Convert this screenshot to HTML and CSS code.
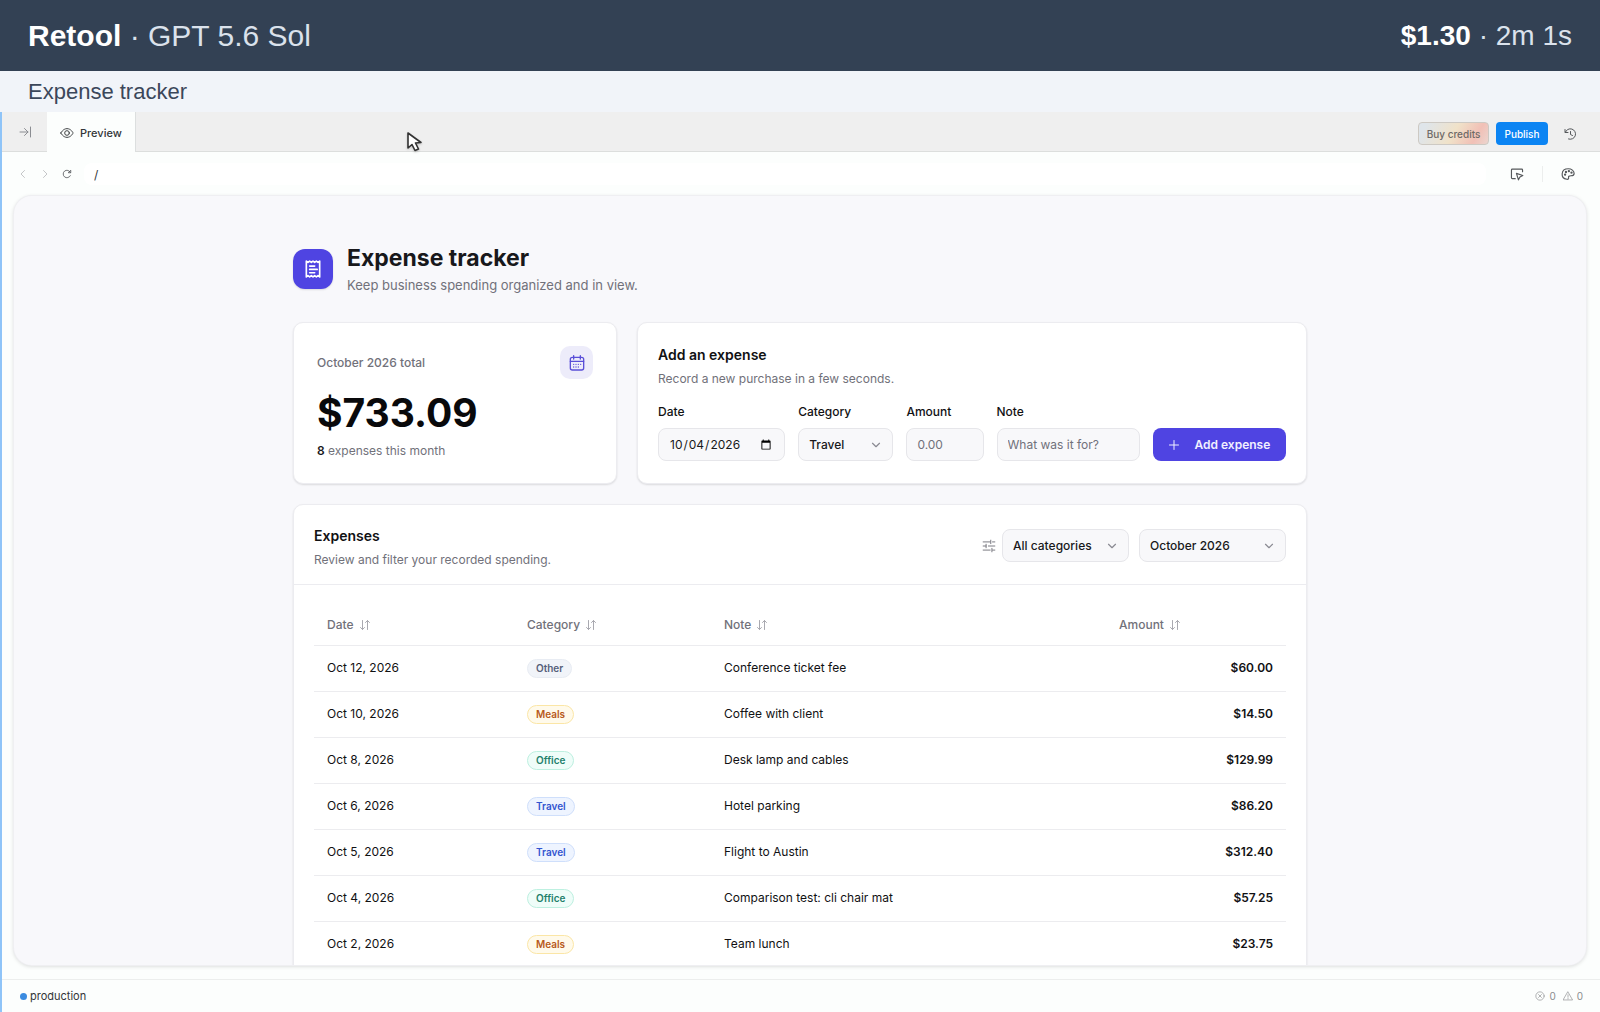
FILE: index.html
```html
<!DOCTYPE html>
<html lang="en">
<head>
<meta charset="utf-8">
<title>Retool · Expense tracker</title>
<meta name="viewport" content="width=device-width, initial-scale=1">
<link rel="stylesheet" href="styles.css">
</head>
<body>
<svg class="sprite" aria-hidden="true">
  <symbol id="chevron" viewBox="0 0 24 24"><path d="m6 9 6 6 6-6"/></symbol>
  <symbol id="sort" viewBox="0 0 24 24"><path d="M7 3v18M3 17l4 4 4-4M17 21V3M13 7l4-4 4 4"/></symbol>
</svg>

<header class="run-bar">
  <p class="run-name"><strong>Retool</strong> · GPT 5.6 Sol</p>
  <p class="run-cost"><strong>$1.30</strong> · 2m 1s</p>
</header>
<p class="run-task">Expense tracker</p>

<div class="editor">
  <div class="tabs">
    <button class="icon-button collapse" aria-label="Collapse panel">
      <svg class="icon icon-12 muted" viewBox="0 0 24 24"><path d="M2 12h16M11 5l7 7-7 7M23 2v20"/></svg>
    </button>
    <button class="tab">
      <svg class="icon icon-14 thin" viewBox="0 0 24 24"><path d="M1.500 12S5 4.500 12 4.500 22.500 12 22.500 12 19 19.500 12 19.500 1.500 12 1.500 12z"/><circle cx="12" cy="12" r="4"/></svg>
      Preview
    </button>
    <div class="tab-actions">
      <button class="small-button credits">Buy credits</button>
      <button class="small-button publish">Publish</button>
      <button class="icon-button history" aria-label="History">
        <svg class="icon icon-12" viewBox="0 0 24 24"><path d="M2 3v6h6M2.500 9A10.500 10.500 0 1 1 9 22M13 7v6l4 2"/></svg>
      </button>
    </div>
    <svg class="pointer" viewBox="0 0 18 22" aria-hidden="true"><path d="M2 2v15l4-3.500 3 6 3.500-1.500-3-6 5.500-.500z"/></svg>
  </div>

  <div class="address">
    <button class="icon-button" aria-label="Back"><svg class="icon icon-12 faint" viewBox="0 0 24 24"><path d="m15 5-7 7 7 7"/></svg></button>
    <button class="icon-button" aria-label="Forward"><svg class="icon icon-12 faint" viewBox="0 0 24 24"><path d="m9 5 7 7-7 7"/></svg></button>
    <button class="icon-button" aria-label="Reload"><svg class="icon icon-10" viewBox="0 0 24 24"><path d="M20 16a9 9 0 1 1 0-8M21 4v5h-5z"/></svg></button>
    <input class="path" aria-label="Page path" value="/">
    <button class="icon-button" aria-label="Select element"><svg class="icon icon-14" viewBox="0 0 24 24"><path d="M9 20H4a1.500 1.500 0 0 1-1.500-1.500V5A1.500 1.500 0 0 1 4 3.500h16A1.500 1.500 0 0 1 21.500 5v3M11 11l3.500 11 2.500-5 5-2.500z"/></svg></button>
    <span class="rule"></span>
    <button class="icon-button" aria-label="Theme"><svg class="icon icon-14" viewBox="0 0 24 24"><path d="M10 21C4 20 1.500 16 2 11.500 2.500 6 7 3 12.500 3S22.500 6.500 22.500 11c0 3.500-2.500 4-5.500 4-3.500 0-4.500 1-4 3.500.3 1.700-.8 2.900-3 2.500z"/><circle cx="7" cy="13" r="1"/><circle cx="8.500" cy="8.500" r="1"/><circle cx="13.500" cy="7" r="1"/><circle cx="18" cy="9.500" r="1"/></svg></button>
  </div>

  <main class="canvas">
    <div class="page">
      <div class="intro">
        <span class="logo"><svg class="icon icon-20" viewBox="0 0 24 24"><path d="M4 2.500l2 1.500 2-1.500L10 4l2-1.500L14 4l2-1.500L18 4l2-1.500v19L18 20l-2 1.500-2-1.500-2 1.500-2-1.500-2 1.500L6 20l-2 1.500zM8 8.500h6M8 12.500h9M8 16.500h6"/></svg></span>
        <div>
          <h1 class="title">Expense tracker</h1>
          <p class="lead">Keep business spending organized and in view.</p>
        </div>
      </div>

      <div class="top-cards">
        <section class="card total">
          <div class="total-head">
            <h2 class="total-label">October 2026 total</h2>
            <span class="badge"><svg class="icon icon-16" viewBox="0 0 24 24"><rect x="2" y="3.500" width="20" height="19" rx="3"/><path d="M2 9.500h20M7 1v5M17 1v5"/><path d="M7 14h.01M10.500 14h.01M14 14h.01M17.500 14h.01M7 18h.01M10.500 18h.01M14 18h.01"/></svg></span>
          </div>
          <p class="total-value">$733.09</p>
          <p class="total-count"><strong>8</strong> expenses this month</p>
        </section>

        <section class="card add">
          <h2 class="card-title">Add an expense</h2>
          <p class="card-note">Record a new purchase in a few seconds.</p>
          <form class="fields">
            <div class="field"><label for="date">Date</label><input class="control" id="date" type="date" value="2026-10-04"></div>
            <div class="field"><label for="category">Category</label>
              <span class="select"><select class="control" id="category"><option>Travel</option><option>Meals</option><option>Office</option><option>Other</option></select><svg class="icon icon-14 arrow"><use href="#chevron"/></svg></span>
            </div>
            <div class="field"><label for="amount">Amount</label><input class="control" id="amount" placeholder="0.00"></div>
            <div class="field"><label for="note">Note</label><input class="control" id="note" placeholder="What was it for?"></div>
            <button class="submit" type="button"><svg class="icon icon-12" viewBox="0 0 24 24"><path d="M12 3v18M3 12h18"/></svg>Add expense</button>
          </form>
        </section>
      </div>

      <section class="card list">
        <div class="list-head">
          <div>
            <h2 class="card-title">Expenses</h2>
            <p class="card-note">Review and filter your recorded spending.</p>
          </div>
          <div class="filters">
            <svg class="icon icon-14 thin" viewBox="0 0 24 24"><path d="M2 5h12M18 5h4M15 2v6M2 12h5M11 12h11M7 9v6M2 19h12M18 19h4M17 16v6"/></svg>
            <span class="select by-category"><select class="control" aria-label="Filter by category"><option>All categories</option></select><svg class="icon icon-14 arrow"><use href="#chevron"/></svg></span>
            <span class="select by-month"><select class="control" aria-label="Filter by month"><option>October 2026</option></select><svg class="icon icon-14 arrow"><use href="#chevron"/></svg></span>
          </div>
        </div>
        <div class="table-wrap">
          <table class="table">
            <colgroup><col class="col-date"><col class="col-category"><col><col class="col-amount"></colgroup>
            <thead>
              <tr>
                <th><button class="sort">Date<svg class="icon icon-12"><use href="#sort"/></svg></button></th>
                <th><button class="sort">Category<svg class="icon icon-12"><use href="#sort"/></svg></button></th>
                <th><button class="sort">Note<svg class="icon icon-12"><use href="#sort"/></svg></button></th>
                <th><button class="sort">Amount<svg class="icon icon-12"><use href="#sort"/></svg></button></th>
              </tr>
            </thead>
            <tbody>
              <tr><td>Oct 12, 2026</td><td><span class="tag other">Other</span></td><td>Conference ticket fee</td><td class="money">$60.00</td></tr>
              <tr><td>Oct 10, 2026</td><td><span class="tag meals">Meals</span></td><td>Coffee with client</td><td class="money">$14.50</td></tr>
              <tr><td>Oct 8, 2026</td><td><span class="tag office">Office</span></td><td>Desk lamp and cables</td><td class="money">$129.99</td></tr>
              <tr><td>Oct 6, 2026</td><td><span class="tag travel">Travel</span></td><td>Hotel parking</td><td class="money">$86.20</td></tr>
              <tr><td>Oct 5, 2026</td><td><span class="tag travel">Travel</span></td><td>Flight to Austin</td><td class="money">$312.40</td></tr>
              <tr><td>Oct 4, 2026</td><td><span class="tag office">Office</span></td><td>Comparison test: cli chair mat</td><td class="money">$57.25</td></tr>
              <tr><td>Oct 2, 2026</td><td><span class="tag meals">Meals</span></td><td>Team lunch</td><td class="money">$23.75</td></tr>
            </tbody>
          </table>
        </div>
      </section>
    </div>
  </main>

  <footer class="status">
    <span class="env">production</span>
    <span class="counter"><svg class="icon icon-10 thin" viewBox="0 0 24 24"><circle cx="12" cy="12" r="10"/><path d="m8.500 8.500 7 7M15.500 8.500l-7 7"/></svg>0</span>
    <span class="counter"><svg class="icon icon-10 thin" viewBox="0 0 24 24"><path d="M12 2.500 23 21.500H1zM12 9v6M12 18v1"/></svg>0</span>
  </footer>
</div>
</body>
</html>
```
FILE: styles.css
```css
* { box-sizing: border-box; }

body {
  margin: 0;
  height: 100vh;
  display: flex;
  flex-direction: column;
  overflow: hidden;
  background: #fcfefd;
  color: #111113;
  font-family: Inter, "Liberation Sans", sans-serif;
  font-size: 12px;
  line-height: 18px;
}

h1, h2, p { margin: 0; }
button, input, select { font: inherit; color: inherit; }
button { margin: 0; padding: 0; border: 0; background: none; cursor: pointer; }

.sprite { position: absolute; width: 0; height: 0; }
.icon { flex: none; fill: none; stroke: currentColor; stroke-width: 2; stroke-linecap: round; stroke-linejoin: round; }
.icon.thin { stroke-width: 1.6; }
.icon-10 { width: 10px; height: 10px; }
.icon-12 { width: 12px; height: 12px; }
.icon-14 { width: 14px; height: 14px; }
.icon-16 { width: 16px; height: 16px; }
.icon-20 { width: 20px; height: 20px; }
.muted { color: #8b8d92; }
.faint { color: #c4c6c8; }

/* Run summary */
.run-bar {
  flex: none;
  display: flex;
  align-items: center;
  justify-content: space-between;
  height: 71px;
  padding: 0 28px;
  background: #334154;
  color: #dbe2ec;
  font-family: "Liberation Sans", Arial, sans-serif;
}
.run-name { font-size: 30px; line-height: 36px; }
.run-cost { font-size: 28px; line-height: 36px; }
.run-bar strong { color: #fff; }
.run-task {
  flex: none;
  padding: 6px 28px 5px;
  background: #f1f4f9;
  color: #3b475a;
  font-family: "Liberation Sans", Arial, sans-serif;
  font-size: 22px;
  line-height: 30px;
}

/* Editor chrome */
.editor {
  flex: 1;
  min-height: 0;
  display: flex;
  flex-direction: column;
  border-left: 2px solid #8fc4f8;
}
.tabs {
  position: relative;
  flex: none;
  display: flex;
  height: 40px;
  background: #efefef;
  box-shadow: inset 0 -1px #dcdedd;
  font-size: 11px;
  font-weight: 500;
}
.icon-button { flex: none; display: grid; place-items: center; width: 22px; height: 22px; color: #55585b; }
.collapse { width: 45px; height: 40px; }
.tab {
  display: flex;
  align-items: center;
  gap: 6px;
  padding: 2px 13px 0;
  background: #fcfefd;
  border-right: 1px solid #dcdfdf;
  color: #333638;
}
.tab-actions { display: flex; align-items: center; gap: 7px; margin-left: auto; padding: 3px 19px 0 0; }
.small-button { height: 23px; border-radius: 4px; font-size: 10px; }
.credits {
  width: 71px;
  border: 1px solid #cdc9c3;
  background: linear-gradient(120deg, #dfe5ea 10%, #f0e2c9 50%, #f1c0b6 80%, #ecd5cf);
  color: #6e6a66;
}
.publish { width: 52px; background: #0b84f3; color: #fff; }
.history { margin-left: 4px; }
.pointer { position: absolute; left: 404px; top: 19px; width: 18px; height: 22px; fill: #fff; stroke: #333; stroke-width: 1.6; stroke-linejoin: round; filter: drop-shadow(0 1px 1px #0003); }

.address { flex: none; display: flex; align-items: center; height: 42px; padding: 2px 21px 0 10px; }
.path { flex: 1; min-width: 0; height: 22px; margin: 0 20px 0 6px; padding: 0 10px; border: 0; border-radius: 8px; background: #fff; color: #333638; }
.rule { width: 1px; height: 16px; margin: 0 14px; background: #eceeed; }

.canvas {
  flex: 1;
  min-height: 0;
  overflow: hidden;
  margin: 2px 14px 14px 12px;
  border-radius: 18px;
  background: #f8f8fb;
  box-shadow: 0 0 0 1px #efeff2, 0 1px 4px #0000002e;
}
.status {
  flex: none;
  display: flex;
  align-items: center;
  gap: 7px;
  height: 33px;
  padding: 0 17px 0 18px;
  border-top: 1px solid #eceeed;
  color: #333638;
  font-size: 11px;
}
.env { display: flex; align-items: center; gap: 3px; margin-right: auto; }
.env::before { content: ""; width: 7px; height: 7px; border-radius: 50%; background: #3b8be0; }
.counter { display: flex; align-items: center; gap: 4px; color: #8b8d8f; font-size: 10px; }

/* Expense page */
.page { max-width: 1014px; margin: 0 auto; padding-top: 46px; }
.intro { display: flex; align-items: center; gap: 14px; margin-bottom: 26px; }
.logo { display: grid; place-items: center; width: 40px; height: 40px; border-radius: 12px; background: #4f44e2; color: #fff; box-shadow: 0 1px 2px #0000001f; }
.title { font-size: 23px; font-weight: 700; line-height: 32px; color: #18181b; }
.lead { font-size: 13px; line-height: 22px; color: #71717a; }

.card { border: 1px solid #ececf0; border-radius: 10px; background: #fff; box-shadow: 0 1px 2px #0000001f; }
.top-cards { display: grid; grid-template-columns: 324px 1fr; gap: 20px; margin-bottom: 20px; }

.total { padding: 23px; }
.total-head { display: flex; align-items: center; justify-content: space-between; }
.total-label { font-size: 12px; font-weight: 500; color: #71717a; }
.badge { display: grid; place-items: center; width: 33px; height: 33px; border-radius: 10px; background: #edecfa; color: #5a4fd8; }
.total-value { margin: 11px 0 6px; font-size: 39px; font-weight: 700; line-height: 46px; color: #09090b; }
.total-count { color: #71717a; }
.total-count strong { font-weight: 600; color: #18181b; }

.add { padding: 20px; }
.card-title { font-size: 14px; font-weight: 600; line-height: 24px; }
.card-note { line-height: 24px; color: #71717a; }
.fields { display: grid; grid-template-columns: 127fr 95fr 77fr 143fr 133fr; gap: 13px; align-items: end; margin-top: 12px; }
.field { display: grid; grid-template-columns: minmax(0, 1fr); gap: 7px; min-width: 0; font-weight: 500; }
.control {
  width: 100%;
  min-width: 0;
  height: 33px;
  padding: 0 10px;
  border: 1px solid #e6e6ea;
  border-radius: 8px;
  background: #f8f8fa;
  font-weight: 400;
  color: #18181b;
}
.control::placeholder { color: #71717a; opacity: 1; }
.select { position: relative; display: block; }
.select .control { appearance: none; font-weight: 500; }
.arrow { position: absolute; right: 10px; top: 10px; color: #8a8a92; pointer-events: none; }
.submit { display: flex; align-items: center; justify-content: center; gap: 14px; height: 33px; border-radius: 8px; background: #4f44e2; color: #f1f0ff; font-weight: 600; }

.list-head { display: flex; align-items: flex-start; justify-content: space-between; padding: 19px 20px 12px; border-bottom: 1px solid #ececf0; }
.filters { display: flex; align-items: center; gap: 10px; padding-top: 5px; color: #71717a; }
.filters > .icon { margin-right: -4px; }
.by-category { width: 127px; }
.by-month { width: 147px; }

.table-wrap { padding: 20px; }
.table { width: 100%; border-collapse: collapse; table-layout: fixed; }
.col-date { width: 200px; }
.col-category { width: 197px; }
.col-amount { width: 180px; }
.table th, .table td { padding: 0 13px; text-align: left; border-bottom: 1px solid #ececef; }
.table th { height: 40px; }
.table td { height: 46px; }
.table .money { text-align: right; font-weight: 600; }
.sort { display: flex; align-items: center; gap: 5px; font-weight: 500; color: #71717a; }
.sort .icon { color: #a9a9b0; }
.tag { display: block; width: fit-content; padding: 0 8px; border: 1px solid; border-radius: 10px; font-size: 10px; font-weight: 600; line-height: 17px; }
.other { color: #56607a; background: #f1f4f9; border-color: #e8ecf3; }
.meals { color: #b85a1c; background: #fffaeb; border-color: #fbe6a6; }
.office { color: #23806b; background: #effdf9; border-color: #bdf0e0; }
.travel { color: #3355d0; background: #eef4ff; border-color: #cfdffb; }
```
